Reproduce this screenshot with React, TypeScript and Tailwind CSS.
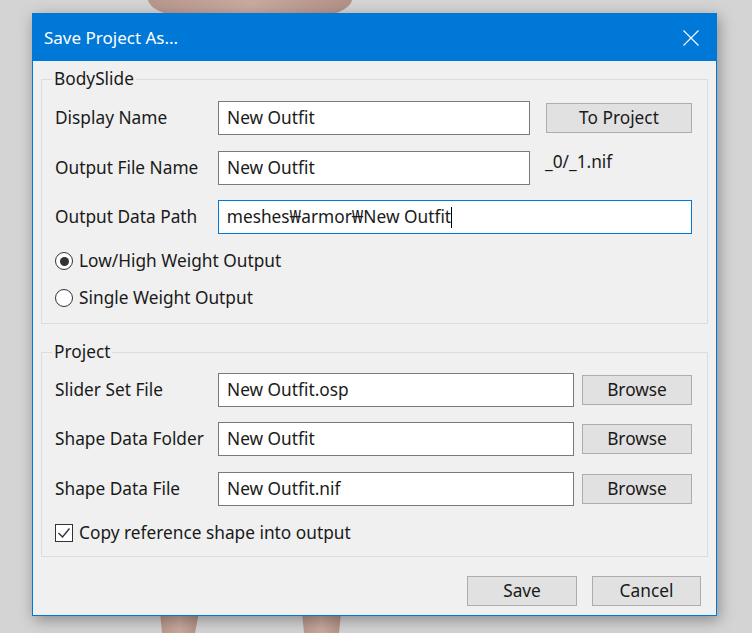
const font = { fontFamily: '"Noto Sans", "Open Sans", sans-serif' };

function TextBox({ value, width, focused, caret }: { value: string; width: string; focused?: boolean; caret?: boolean }) {
  return (
    <div
      className={`${width} h-[34px] bg-white border flex items-center px-[8px] text-[17.3px] text-[#1a1a1a] ${
        focused ? 'border-[#0078d7]' : 'border-[#7a7a7a]'
      }`}
    >
      <span className="whitespace-nowrap">{value}</span>
      {caret && <span className="w-px h-[21px] bg-black" />}
    </div>
  );
}

function Button({ label, width }: { label: string; width: string }) {
  return (
    <button className={`${width} h-[30px] bg-[#e1e1e1] border border-[#adadad] text-[17.3px] text-[#1a1a1a] flex items-center justify-center`}>
      {label}
    </button>
  );
}

function Group({ title, children, className }: { title: string; children: React.ReactNode; className?: string }) {
  return (
    <div className={`border border-[#dcdcdc] pl-[13px] pr-[15px] ${className ?? ''}`}>
      <div className="-mt-[12px] h-[22px] leading-[22px]">
        <span className="bg-[#f0f0f0] -ml-[3px] px-[2px] text-[17.3px] text-[#1a1a1a]">{title}</span>
      </div>
      {children}
    </div>
  );
}

function Row({ label, children, className }: { label: string; children: React.ReactNode; className?: string }) {
  return (
    <div className={`flex items-center ${className ?? ''}`}>
      <div className="w-[163px] text-[17.3px] text-[#1a1a1a] whitespace-nowrap">{label}</div>
      {children}
    </div>
  );
}

function Radio({ label, checked }: { label: string; checked?: boolean }) {
  return (
    <div className="flex items-center h-[22px] text-[17.3px] text-[#1a1a1a]">
      <span className="w-[18px] h-[18px] rounded-full border border-[#333] bg-white flex items-center justify-center mr-[6px]">
        {checked && <span className="w-[9px] h-[9px] rounded-full bg-[#333]" />}
      </span>
      {label}
    </div>
  );
}

function BackdropFigure() {
  return (
    <svg className="absolute left-0 top-0" width="752" height="633" viewBox="0 0 752 633">
      <defs>
        <linearGradient id="skin" x1="0" x2="1" y1="0" y2="0">
          <stop offset="0" stopColor="#b8978c" />
          <stop offset="0.5" stopColor="#c9aa9f" />
          <stop offset="1" stopColor="#b29186" />
        </linearGradient>
      </defs>
      <path d="M148 0 L352 0 C350 10 330 22 250 24 C170 22 150 10 148 0 Z" fill="url(#skin)" />
      <path d="M160 612 L199 612 L195 633 L162 633 Z" fill="url(#skin)" />
      <path d="M302 612 L341 612 L339 633 L304 633 Z" fill="url(#skin)" />
    </svg>
  );
}

export default function App() {
  return (
    <div className="relative w-[752px] h-[633px] overflow-hidden bg-[#d4d4d4]" style={font}>
      <BackdropFigure />

      {/* dialog window */}
      <div className="absolute left-[32px] top-[13px] w-[685px] h-[603px] border border-[#0078d7] bg-[#f0f0f0] shadow-[2px_4px_14px_rgba(0,0,0,0.35)] flex flex-col">
        <div className="h-[47px] bg-[#0078d7] flex items-center justify-between pl-[11px] pr-[17px] shrink-0">
          <span className="text-white text-[17px]">Save Project As...</span>
          <svg width="16" height="16" viewBox="0 0 16 16">
            <path d="M0.5 0.5 L15.5 15.5 M15.5 0.5 L0.5 15.5" stroke="#fff" strokeWidth="1.1" />
          </svg>
        </div>

        <div className="px-[8px] pt-[18px] flex flex-col">
          <Group title="BodySlide" className="pb-[14px]">
            <Row label="Display Name" className="mt-[11px]">
              <TextBox value="New Outfit" width="w-[312px]" />
              <div className="ml-[16px]">
                <Button label="To Project" width="w-[146px]" />
              </div>
            </Row>
            <Row label="Output File Name" className="mt-[16px]">
              <TextBox value="New Outfit" width="w-[312px]" />
              <span className="ml-[15px] -mt-[12px] text-[17.3px] text-[#1a1a1a]">_0/_1.nif</span>
            </Row>
            <Row label="Output Data Path" className="mt-[15px]">
              <TextBox value="meshes₩armor₩New Outfit" width="w-[475px]" focused caret />
            </Row>
            <div className="mt-[16px] flex flex-col gap-[15px]">
              <Radio label="Low/High Weight Output" checked />
              <Radio label="Single Weight Output" />
            </div>
          </Group>

          <Group title="Project" className="mt-[28px] pb-[12px]">
            <Row label="Slider Set File" className="mt-[10px]">
              <TextBox value="New Outfit.osp" width="w-[356px]" />
              <div className="ml-[8px]">
                <Button label="Browse" width="w-[110px]" />
              </div>
            </Row>
            <Row label="Shape Data Folder" className="mt-[15px]">
              <TextBox value="New Outfit" width="w-[356px]" />
              <div className="ml-[8px]">
                <Button label="Browse" width="w-[110px]" />
              </div>
            </Row>
            <Row label="Shape Data File" className="mt-[16px]">
              <TextBox value="New Outfit.nif" width="w-[356px]" />
              <div className="ml-[8px]">
                <Button label="Browse" width="w-[110px]" />
              </div>
            </Row>
            <div className="mt-[16px] flex items-center h-[22px] text-[17.3px] text-[#1a1a1a]">
              <span className="w-[18px] h-[18px] border border-[#333] bg-white flex items-center justify-center mr-[6px]">
                <svg width="14" height="14" viewBox="0 0 14 14">
                  <path d="M1.5 7 L5.5 11 L12.5 2.5" fill="none" stroke="#333" strokeWidth="1.4" />
                </svg>
              </span>
              Copy reference shape into output
            </div>
          </Group>

          <div className="mt-[19px] flex justify-end gap-[15px] pr-[7px]">
            <Button label="Save" width="w-[110px]" />
            <Button label="Cancel" width="w-[109px]" />
          </div>
        </div>
      </div>
    </div>
  );
}
